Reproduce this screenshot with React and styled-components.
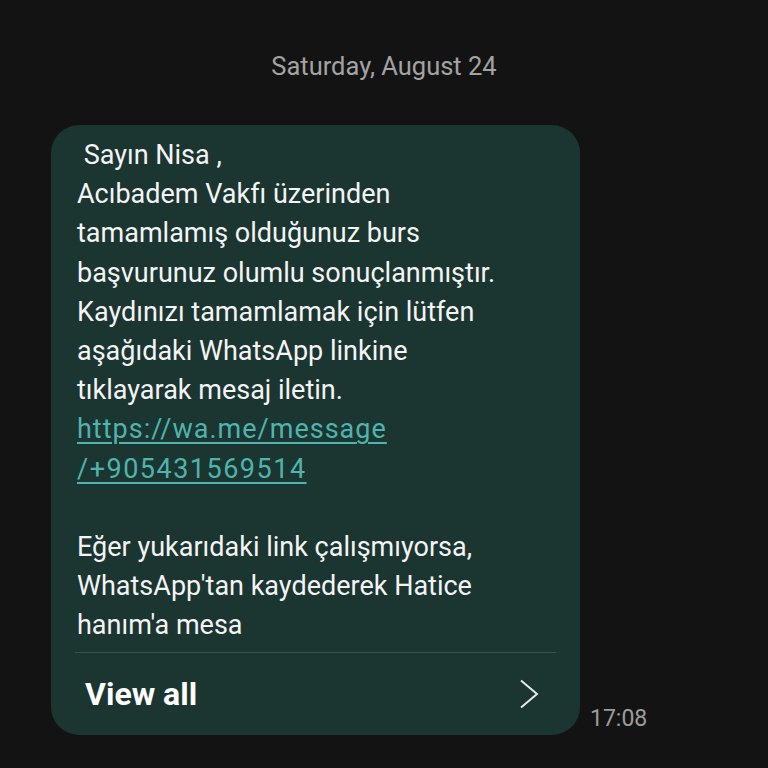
import styled, { createGlobalStyle } from 'styled-components'

const GlobalStyle = createGlobalStyle`
  html, body {
    margin: 0;
    background: #131313;
  }
  body {
    font-family: Roboto, "Noto Sans", sans-serif;
  }
`

const lines = [
  ' Sayın Nisa ,',
  'Acıbadem Vakfı üzerinden',
  'tamamlamış olduğunuz burs',
  'başvurunuz olumlu sonuçlanmıştır.',
  'Kaydınızı tamamlamak için lütfen',
  'aşağıdaki WhatsApp linkine',
  'tıklayarak mesaj iletin.',
]

const tail = [
  'Eğer yukarıdaki link çalışmıyorsa,',
  "WhatsApp'tan kaydederek Hatice",
  "hanım'a mesa",
]

export default function App() {
  return (
    <>
      <GlobalStyle />
      <Screen>
        <DateLabel>Saturday, August 24</DateLabel>
        <MessageRow>
          <Bubble>
            <Body>
              {lines.map(l => (
                <Line key={l}>{l}</Line>
              ))}
              <Link href="#" $spacing={1}>https://wa.me/message</Link>
              <Link href="#" $spacing={1.5}>/+905431569514</Link>
              <Line>&nbsp;</Line>
              {tail.map(l => (
                <Line key={l}>{l}</Line>
              ))}
            </Body>
            <Footer>
              <ViewAll>View all</ViewAll>
              <Chevron viewBox="0 0 20 30">
                <path d="M2 1.5 L18 15 L2 28.5" />
              </Chevron>
            </Footer>
          </Bubble>
          <Time>17:08</Time>
        </MessageRow>
      </Screen>
    </>
  )
}

const Screen = styled.div`
  width: 768px;
  height: 768px;
  display: flex;
  flex-direction: column;
  padding-top: 49px;
  box-sizing: border-box;
  overflow: hidden;
`

const DateLabel = styled.div`
  text-align: center;
  color: #a3a3a3;
  font-size: 25.5px;
  line-height: 34px;
`

const MessageRow = styled.div`
  display: flex;
  align-items: flex-end;
  gap: 10px;
  padding-left: 51px;
  margin-top: 42px;
`

const Bubble = styled.div`
  width: 529px;
  background: #1b3531;
  border-radius: 28px;
  display: flex;
  flex-direction: column;
`

const Body = styled.div`
  padding: 11px 20px 6px 26px;
  color: #f4f4f4;
  font-size: 27px;
  line-height: 39.2px;
`

const Line = styled.div`
  white-space: pre;
`

const Link = styled.a`
  display: block;
  width: fit-content;
  color: #4fb3ae;
  letter-spacing: ${p => p.$spacing}px;
  text-decoration: underline;
  text-decoration-thickness: 2px;
  text-underline-offset: 4px;
  white-space: pre;
`

const Footer = styled.div`
  margin: 0 24px 0 24px;
  border-top: 1px solid #3b524e;
  height: 82px;
  display: flex;
  align-items: center;
  justify-content: space-between;
  padding: 0 17px 0 10px;
`

const ViewAll = styled.span`
  color: #ffffff;
  font-size: 32px;
  font-weight: 700;
`

const Chevron = styled.svg`
  width: 20px;
  height: 30px;
  fill: none;
  stroke: #e8e8e8;
  stroke-width: 2;
`

const Time = styled.span`
  color: #9c9c9c;
  font-size: 23px;
  margin-bottom: 3px;
`
